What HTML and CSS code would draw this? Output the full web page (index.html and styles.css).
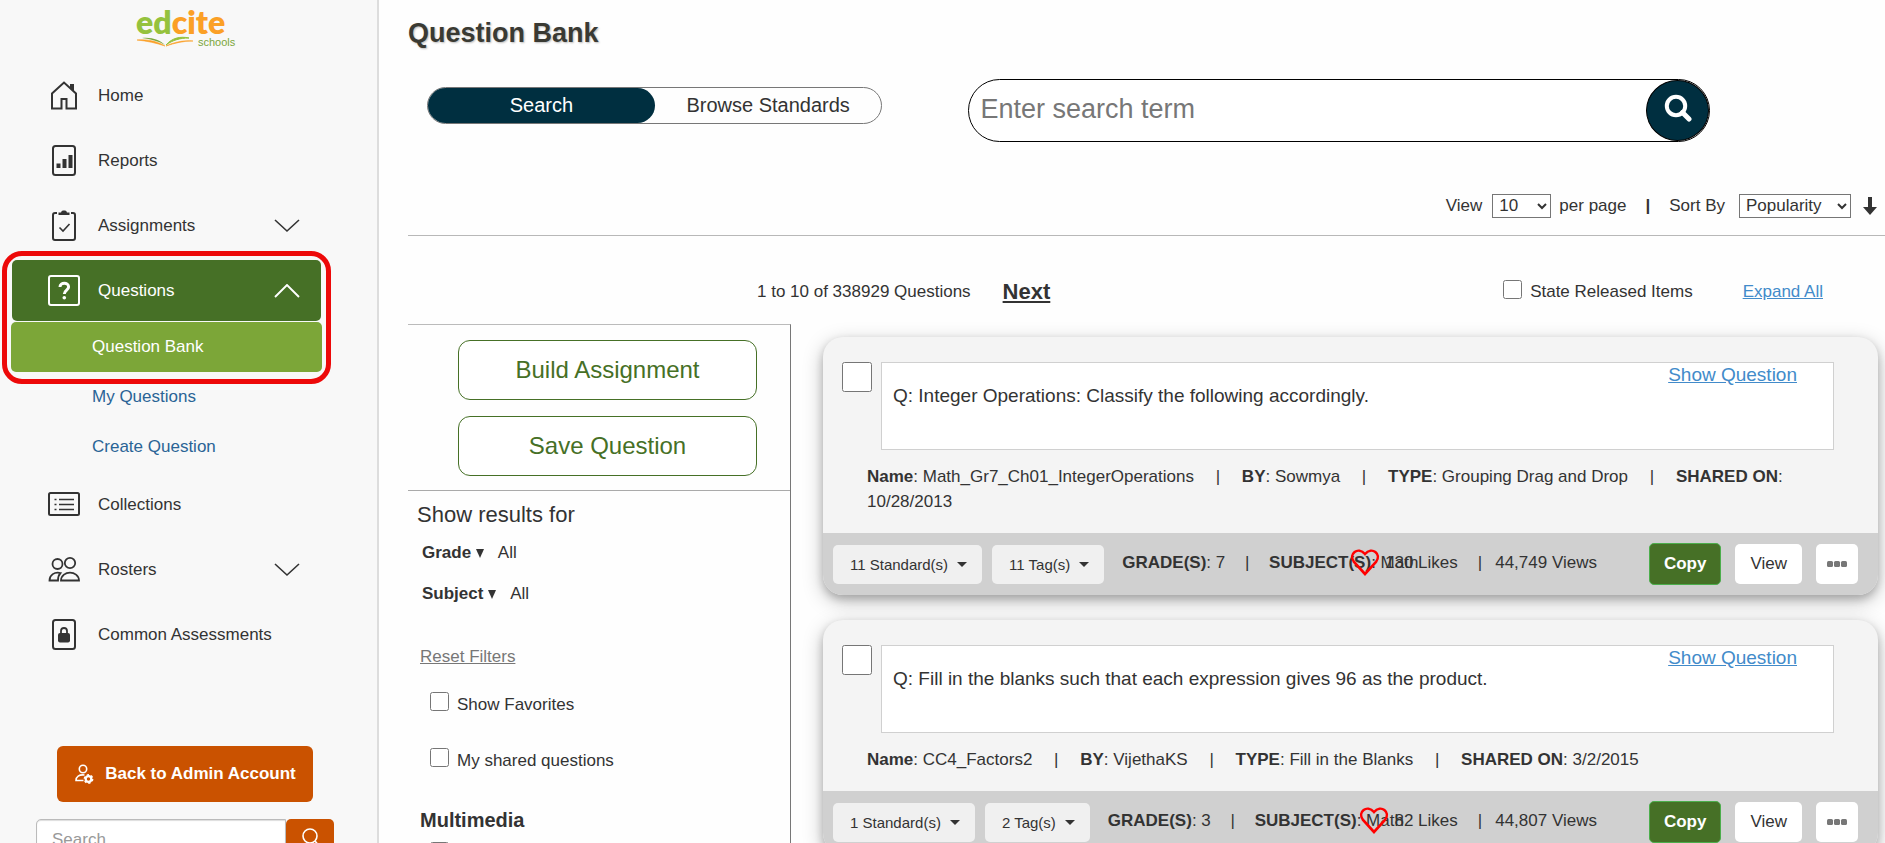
FILE: index.html
```html
<!DOCTYPE html>
<html lang="en">
<head>
    <meta charset="UTF-8">
    <meta name="viewport" content="width=device-width, initial-scale=1.0">
    <title>Question Bank</title>
    <link rel="stylesheet" href="styles.css">
</head>
<body>
    <div class="app">
        <aside class="sidebar">
            <a class="logo" href="#" aria-label="edcite schools">
                <svg width="100" height="44" viewBox="0 0 100 44">
                    <text class="logo-name" x="0" y="29"><tspan fill="#95c23d">ed</tspan><tspan fill="#fba026">cite</tspan></text>
                    <path d="M1 35c10-1 20 1 28 6-9-3-18-5-28-6z" fill="#fba026" stroke="#fba026" stroke-width=".6"/>
                    <path d="M6 33c10-1 18 2 23 7-7-4-14-6-23-7z" fill="#7ba63a"/>
                    <path d="M30 40c6-7 14-9 23-7-9 0-16 2-23 7z" fill="#95c23d" stroke="#95c23d"/>
                    <path d="M30 41c8-4 18-6 27-5-10 0-18 2-27 5z" fill="#fba026" stroke="#fba026" stroke-width=".6"/>
                    <text class="logo-sub" x="62" y="41">schools</text>
                </svg>
            </a>
            <nav class="nav">
                <a class="nav-item" href="#">
                    <svg class="nav-icon" viewBox="0 0 32 32"><path d="M4 13.500V28.500h9.500V19h5v9.500H28V13.500L16 2.500z" fill="none" stroke="currentColor" stroke-width="2"/><path d="M22 4h4v8l-4-4z" fill="currentColor"/></svg>
                    Home
                </a>
                <a class="nav-item" href="#">
                    <svg class="nav-icon" viewBox="0 0 32 32"><rect x="5" y="1" width="22" height="29" rx="2.500" fill="none" stroke="currentColor" stroke-width="2"/><path d="M8.500 18.500h4V23h-4zM14.500 14h4v9h-4zM20.500 10h4v13h-4z" fill="currentColor"/></svg>
                    Reports
                </a>
                <a class="nav-item" href="#">
                    <svg class="nav-icon" viewBox="0 0 32 32"><path d="M9 3H7a2 2 0 0 0-2 2v23a2 2 0 0 0 2 2h18a2 2 0 0 0 2-2V5a2 2 0 0 0-2-2h-2" fill="none" stroke="currentColor" stroke-width="2"/><path d="M10.500 5V2.500h2.500Q13.500 .5 15 .5h2q1.500 0 2 2h2.500V5z" fill="currentColor"/><path d="M11.500 17.500l3.500 3.500 6.500-7" fill="none" stroke="currentColor" stroke-width="1.600"/></svg>
                    Assignments
                    <svg class="chevron" viewBox="0 0 26 14"><path d="M1 1l12 11L25 1" fill="none" stroke="currentColor" stroke-width="1.600"/></svg>
                </a>
                <div class="nav-current">
                    <a class="nav-item active" href="#">
                        <svg class="nav-icon" viewBox="0 0 32 32"><rect x="1" y="1" width="30" height="29" rx="2" fill="none" stroke="currentColor" stroke-width="2"/><path d="M12 12c0-5 8.600-5 8.600 0 0 3-4.300 3.200-4.300 7" fill="none" stroke="currentColor" stroke-width="3"/><rect x="14.500" y="21" width="3.600" height="3.600" rx="1.800" fill="currentColor"/></svg>
                        Questions
                        <svg class="chevron" viewBox="0 0 26 14"><path d="M1 13L13 1l12 12" fill="none" stroke="currentColor" stroke-width="1.900"/></svg>
                    </a>
                    <a class="nav-sub selected" href="#">Question Bank</a>
                    <div class="nav-highlight"></div>
                </div>
                <a class="nav-sub" href="#">My Questions</a>
                <a class="nav-sub" href="#">Create Question</a>
                <a class="nav-item" href="#">
                    <svg class="nav-icon" viewBox="0 0 32 32"><rect x="1" y="4" width="30" height="22" rx="1.500" fill="none" stroke="currentColor" stroke-width="2"/><path d="M11 10.500h15M11 15.500h15M11 20.500h15M6.500 10.500h2M6.500 15.500h2M6.500 20.500h2" stroke="currentColor" stroke-width="1.600"/></svg>
                    Collections
                </a>
                <a class="nav-item" href="#">
                    <svg class="nav-icon" viewBox="0 0 32 32" fill="none" stroke="currentColor" stroke-width="1.800"><circle cx="9.500" cy="10" r="5"/><circle cx="22" cy="9" r="5.200"/><path d="M13 26.500c.5-10.500 17.500-10.500 18 0zM10 26.500H1.500c0-5.500 5-9 11-7.500-2 2-2.500 4-2.500 7.500z"/></svg>
                    Rosters
                    <svg class="chevron" viewBox="0 0 26 14"><path d="M1 1l12 11L25 1" fill="none" stroke="currentColor" stroke-width="1.600"/></svg>
                </a>
                <a class="nav-item" href="#">
                    <svg class="nav-icon" viewBox="0 0 32 32"><rect x="5" y="1" width="22" height="29" rx="2.500" fill="none" stroke="currentColor" stroke-width="2"/><rect x="10" y="14" width="12" height="9.500" rx="2" fill="currentColor"/><path d="M13 15v-3c0-4 6-4 6 0v3" fill="none" stroke="currentColor" stroke-width="1.800"/></svg>
                    Common Assessments
                </a>
            </nav>
            <button class="admin-button" type="button">
                <svg width="20" height="20" viewBox="0 0 20 20" fill="none" stroke="currentColor" stroke-width="1.600"><circle cx="9" cy="5" r="3.700"/><path d="M9.500 16.500H2c0-4 3-6 8.500-5.500"/><circle cx="14.500" cy="15" r="2.800" stroke-width="2.200"/><circle cx="14.500" cy="15" r="4.200" stroke-width="1.400" stroke-dasharray="2.200"/></svg>
                Back to Admin Account
            </button>
            <form class="side-search">
                <input type="text" placeholder="Search" aria-label="Search site">
                <button type="button" aria-label="Search">
                    <svg width="22" height="22" viewBox="0 0 22 22" fill="none" stroke="currentColor" stroke-width="1.600"><circle cx="11" cy="9" r="7"/><path d="M16 14l5 6"/></svg>
                </button>
            </form>
        </aside>

        <main class="main">
            <h1>Question Bank</h1>
            <div class="search-row">
                <div class="mode-toggle">
                    <button class="on" type="button">Search</button>
                    <button type="button">Browse Standards</button>
                </div>
                <form class="term-search">
                    <input type="text" placeholder="Enter search term" aria-label="Enter search term">
                    <button type="button" aria-label="Search">
                        <svg width="28" height="28" viewBox="0 0 28 28" fill="none" stroke="currentColor"><circle cx="12" cy="12" r="9.200" stroke-width="4"/><path d="M18.500 18.500l6.500 6.500" stroke-width="5" stroke-linecap="round"/></svg>
                    </button>
                </form>
            </div>
            <div class="sort-row">
                <label for="pageSize">View</label>
                <select class="page-size" id="pageSize"><option>10</option><option>20</option></select>
                <span>per page</span>
                <b class="bar">|</b>
                <label for="sortBy">Sort By</label>
                <select class="sort-by" id="sortBy"><option>Popularity</option><option>Date</option></select>
                <button class="sort-dir" type="button" aria-label="Descending">
                    <svg width="14" height="18" viewBox="0 0 14 18"><path d="M5 0h4v10h5l-7 8-7-8h5z" fill="currentColor"/></svg>
                </button>
            </div>
            <div class="pager-row">
                <span>1 to 10 of 338929 Questions</span>
                <a class="next" href="#">Next</a>
                <label class="check released"><input type="checkbox">State Released Items</label>
                <a class="expand" href="#">Expand All</a>
            </div>

            <div class="content">
                <section class="filters">
                    <div class="actions">
                        <button type="button">Build Assignment</button>
                        <button type="button">Save Question</button>
                    </div>
                    <h2>Show results for</h2>
                    <div class="filter"><b>Grade <span class="caret"></span></b>All</div>
                    <div class="filter"><b>Subject <span class="caret"></span></b>All</div>
                    <a class="reset" href="#">Reset Filters</a>
                    <label class="check"><input type="checkbox">Show Favorites</label>
                    <label class="check"><input type="checkbox">My shared questions</label>
                    <h3>Multimedia</h3>
                    <div class="check media"><input type="checkbox" aria-label="Multimedia"></div>
                </section>

                <section class="results">
                    <article class="card">
                        <div class="card-body">
                            <div class="question">
                                <input type="checkbox" aria-label="Select question">
                                <div class="preview">
                                    <p>Q: Integer Operations: Classify the following accordingly.</p>
                                    <a href="#">Show Question</a>
                                </div>
                            </div>
                            <p class="info"><b>Name</b>: Math_Gr7_Ch01_IntegerOperations <i>|</i> <b>BY</b>: Sowmya <i>|</i> <b>TYPE</b>: Grouping Drag and Drop <i>|</i> <b>SHARED ON</b>: 10/28/2013</p>
                        </div>
                        <div class="card-foot">
                            <div class="tags">
                                <button class="drop" type="button">11 Standard(s) <span class="caret"></span></button>
                                <button class="drop" type="button">11 Tag(s) <span class="caret"></span></button>
                                <p><b>GRADE(S)</b>: 7 <i>|</i> <b>SUBJECT(S)</b>: Math</p>
                            </div>
                            <div class="stats">
                                <svg class="heart" viewBox="0 0 30 28"><path d="M15 26L4 14C-2 6 8-2 15 6c7-8 17 0 11 8z" fill="none" stroke="#f00" stroke-width="2.600"/></svg>
                                <span>130 Likes</span>
                                <span class="line">|</span>
                                <span>44,749 Views</span>
                            </div>
                            <button class="btn copy" type="button">Copy</button>
                            <button class="btn" type="button">View</button>
                            <button class="btn more" type="button" aria-label="More"><svg width="20" height="6" viewBox="0 0 20 6" fill="#777"><rect width="6" height="6" rx="1.500"/><rect x="7" width="6" height="6" rx="1.500"/><rect x="14" width="6" height="6" rx="1.500"/></svg></button>
                        </div>
                    </article>

                    <article class="card">
                        <div class="card-body">
                            <div class="question">
                                <input type="checkbox" aria-label="Select question">
                                <div class="preview">
                                    <p>Q: Fill in the blanks such that each expression gives 96 as the product.</p>
                                    <a href="#">Show Question</a>
                                </div>
                            </div>
                            <p class="info"><b>Name</b>: CC4_Factors2 <i>|</i> <b>BY</b>: VijethaKS <i>|</i> <b>TYPE</b>: Fill in the Blanks <i>|</i> <b>SHARED ON</b>: 3/2/2015</p>
                        </div>
                        <div class="card-foot">
                            <div class="tags">
                                <button class="drop" type="button">1 Standard(s) <span class="caret"></span></button>
                                <button class="drop" type="button">2 Tag(s) <span class="caret"></span></button>
                                <p><b>GRADE(S)</b>: 3 <i>|</i> <b>SUBJECT(S)</b>: Math</p>
                            </div>
                            <div class="stats">
                                <svg class="heart" viewBox="0 0 30 28"><path d="M15 26L4 14C-2 6 8-2 15 6c7-8 17 0 11 8z" fill="none" stroke="#f00" stroke-width="2.600"/></svg>
                                <span>82 Likes</span>
                                <span class="line">|</span>
                                <span>44,807 Views</span>
                            </div>
                            <button class="btn copy" type="button">Copy</button>
                            <button class="btn" type="button">View</button>
                            <button class="btn more" type="button" aria-label="More"><svg width="20" height="6" viewBox="0 0 20 6" fill="#777"><rect width="6" height="6" rx="1.500"/><rect x="7" width="6" height="6" rx="1.500"/><rect x="14" width="6" height="6" rx="1.500"/></svg></button>
                        </div>
                    </article>
                </section>
            </div>
        </main>
    </div>
</body>
</html>
```
FILE: styles.css
```css
* {
    box-sizing: border-box;
}
body {
    margin: 0;
    font-family: "Liberation Sans", Arial, sans-serif;
    font-size: 17px;
    line-height: 25px;
    color: #333;
    background: #fefefe;
}
h1, h2, h3, p {
    margin: 0;
}
button, input, select {
    font-family: inherit;
    font-size: inherit;
    color: inherit;
}
button {
    padding: 0;
    border: none;
    background: none;
    cursor: pointer;
}
i {
    font-style: normal;
}
.app {
    display: flex;
    height: 100vh;
    overflow: hidden;
}

/* Sidebar */
.sidebar {
    flex: 0 0 377px;
    min-width: 0;
    background: #f8f8f8;
}
.logo {
    display: block;
    height: 63px;
    padding: 5px 0 0 136px;
}
.logo svg {
    overflow: visible;
}
.logo-name {
    font-family: Lato, sans-serif;
    font-weight: 800;
    font-size: 32px;
}
.logo-sub {
    font-size: 11px;
    fill: #7ba63a;
}
.nav-item {
    display: flex;
    align-items: center;
    height: 65px;
    padding-left: 48px;
    color: #333;
    text-decoration: none;
}
.nav-icon {
    width: 32px;
    height: 32px;
    margin-right: 18px;
}
.chevron {
    width: 26px;
    height: 14px;
    margin-left: auto;
    margin-right: 77px;
}
.nav-current {
    position: relative;
    margin: 0 55px 0 11px;
    padding-top: 2px;
}
.nav-item.active {
    height: 61px;
    margin: 0 1px;
    padding-left: 36px;
    border-radius: 5px;
    background: #467026;
    color: #fff;
}
.nav-item.active .chevron {
    margin-right: 21px;
}
.nav-sub {
    display: block;
    padding-left: 92px;
    line-height: 50px;
    color: #2a6496;
    text-decoration: none;
}
.nav-sub.selected {
    margin-top: 1px;
    padding-left: 81px;
    border-radius: 5px;
    background: #7ca638;
    color: #fff;
}
.nav-highlight {
    position: absolute;
    inset: -7px -9px -12px -9px;
    border: 5px solid #ed0909;
    border-radius: 20px;
    pointer-events: none;
}
.admin-button {
    display: flex;
    align-items: center;
    justify-content: center;
    gap: 11px;
    width: 256px;
    height: 56px;
    margin: 79px 0 17px 57px;
    border-radius: 6px;
    background: #ca5200;
    color: #fff;
    font-weight: bold;
}
.side-search {
    display: flex;
    margin: 0 43px 0 36px;
}
.side-search input {
    flex: 1;
    min-width: 0;
    height: 42px;
    padding: 0 15px;
    border: 1px solid #bbb;
    border-radius: 5px 0 0 5px;
    box-shadow: inset 0 1px 1px #ddd;
}
.side-search input::placeholder {
    color: #999;
}
.side-search button {
    width: 48px;
    border-radius: 5px;
    background: #ca5200;
    color: #fff;
}

/* Page header */
.main {
    flex: 1;
    min-width: 0;
    padding: 16px 0 0 29px;
    border-left: 2px solid #ddd;
}
h1 {
    font-size: 27px;
    line-height: 34px;
    color: #3a3a33;
    text-shadow: 1px 1px 2px #bbb;
}
.search-row {
    display: flex;
    align-items: flex-start;
    gap: 86px;
    padding: 29px 175px 0 19px;
}
.mode-toggle {
    flex: 455;
    display: flex;
    margin-top: 8px;
    border: 1px solid #777;
    border-radius: 19px;
}
.mode-toggle button {
    flex: 1;
    height: 35px;
    border-radius: 18px;
    font-size: 20px;
}
.mode-toggle .on {
    background: #002f40;
    color: #fff;
}
.term-search {
    flex: 742;
    display: flex;
    height: 63px;
    border: 1px solid #000;
    border-radius: 32px;
    background: #fff;
}
.term-search input {
    flex: 1;
    min-width: 0;
    padding: 0 11px 2px;
    border: none;
    background: none;
    font-size: 27px;
}
.term-search input::placeholder {
    color: #777;
}
.term-search button {
    width: 63px;
    border: 1px solid #000;
    border-radius: 50%;
    background: #002f40;
    color: #fff;
}
.sort-row {
    display: flex;
    align-items: center;
    justify-content: flex-end;
    height: 94px;
    padding: 48px 8px 14px 0;
    border-bottom: 1px solid #b8b8b8;
}
.sort-row select {
    height: 24px;
    padding: 0 0 0 2px;
    border: 1px solid #767676;
    border-radius: 0;
    background: #fff;
}
.page-size {
    width: 59px;
    margin: 0 8px 0 10px;
}
.bar {
    margin: 0 19px;
}
.sort-by {
    width: 112px;
    margin: 0 12px 0 14px;
}
.sort-dir {
    height: 18px;
    line-height: 0;
}
.pager-row {
    display: flex;
    align-items: center;
    padding: 43px 62px 20px 349px;
}
.next {
    margin-left: 32px;
    font-size: 22px;
    font-weight: bold;
    color: #333;
}
.expand {
    margin-left: 50px;
    color: #428bca;
}
.check {
    display: flex;
    align-items: center;
    gap: 8px;
}
.check input {
    width: 19px;
    height: 19px;
    margin: 0 0 5px;
}
.released {
    margin-left: auto;
}

/* Filters */
.content {
    display: flex;
    align-items: stretch;
}
.filters {
    flex: 0 0 383px;
    border-top: 1px solid #bbb;
    border-right: 1px solid #777;
}
.actions {
    display: flex;
    flex-direction: column;
    gap: 16px;
    padding: 15px 33px 14px 50px;
    border-bottom: 1px solid #aaa;
}
.actions button {
    height: 60px;
    border: 1px solid #467026;
    border-radius: 12px;
    background: #fff;
    color: #467026;
    font-size: 24px;
}
h2 {
    padding: 9px;
    font-size: 22px;
    font-weight: normal;
    line-height: 30px;
}
.filter {
    display: flex;
    gap: 14px;
    padding: 1px 14px 15px;
}
.caret {
    display: inline-block;
    border: 4px solid transparent;
    border-top: 9px solid #333;
    border-bottom: none;
}
.reset {
    display: block;
    padding: 23px 12px;
    color: #777;
}
.filters .check {
    padding: 0 22px;
    margin-bottom: 31px;
}
.filters .check input {
    margin-bottom: 6px;
}
h3 {
    padding: 4px 12px 0;
    font-size: 20px;
}
.filters .media {
    margin: 9px 0 0;
}

/* Result cards */
.results {
    flex: 1;
    min-width: 0;
    padding: 13px 7px 0 32px;
}
.card {
    margin-bottom: 25px;
    border-radius: 20px;
    background: #f4f4f4;
    box-shadow: 0 4px 8px rgba(0, 0, 0, 0.2), 0 6px 20px rgba(0, 0, 0, 0.25);
    overflow: hidden;
}
.card-body {
    padding: 25px 44px 19px;
}
.question {
    display: flex;
    gap: 9px;
    margin: 0 0 14px -25px;
}
.question input {
    width: 30px;
    height: 30px;
    margin: 0;
}
.preview {
    flex: 1;
    display: flex;
    justify-content: space-between;
    height: 88px;
    padding: 0 36px 0 11px;
    border: 1px solid #d0d0d0;
    background: #fff;
    font-size: 19px;
}
.preview p {
    padding-top: 20px;
}
.preview a {
    line-height: 23px;
    color: #428bca;
}
.info i {
    margin: 0 17px;
}
.card-foot {
    display: flex;
    align-items: center;
    height: 62px;
    padding: 0 20px 0 10px;
    background: #d0d0d0;
    white-space: nowrap;
}
/* The tag list may run under the stats when space is short */
.tags {
    flex: 1 1 0;
    min-width: 0;
    display: flex;
    align-items: center;
    gap: 10px;
}
.tags p {
    padding: 0 0 3px 8px;
}
.tags i {
    margin: 0 15px;
}
.drop {
    display: flex;
    align-items: center;
    gap: 9px;
    height: 39px;
    padding: 0 15px 0 17px;
    border-radius: 5px;
    background: #f0f0f0;
    font-size: 15px;
}
.drop .caret {
    border-width: 5px 5px 0;
}
.stats {
    display: flex;
    align-items: center;
    padding-bottom: 4px;
}
.heart {
    width: 30px;
    height: 28px;
    margin-right: 5px;
}
.stats .line {
    margin: 0 13px 0 20px;
}
.btn {
    height: 40px;
    margin-left: 14px;
    padding: 0 15px;
    border-radius: 5px;
    background: #fff;
}
.btn.copy {
    height: 42px;
    margin-left: 52px;
    padding: 0 14px;
    border: 1px solid #4cae4c;
    background: #467026;
    color: #fff;
    font-weight: bold;
}
.btn.more {
    padding: 0 11px;
}
.btn svg {
    display: block;
}
```
